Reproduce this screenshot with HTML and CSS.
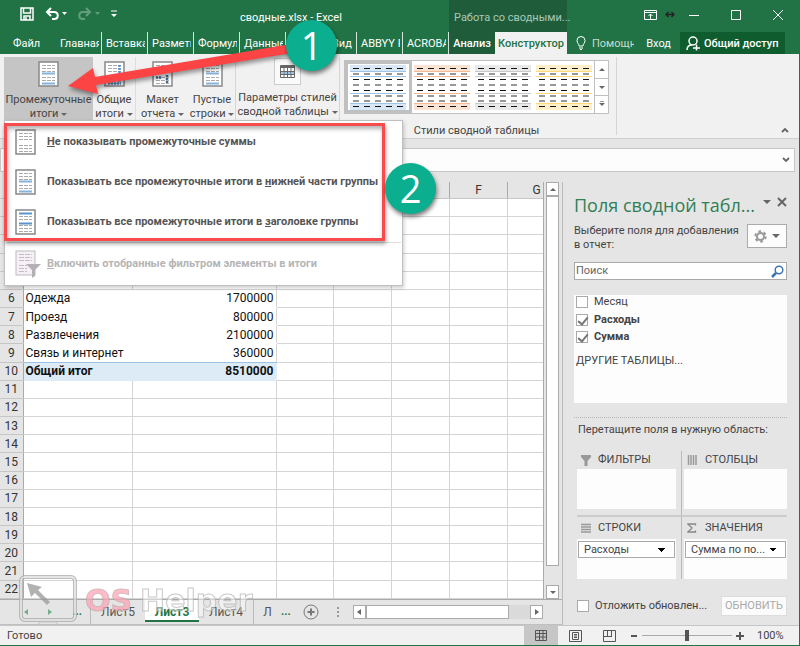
FILE: index.html
```html
<!DOCTYPE html>
<html lang="ru">
  <head>
    <meta charset="utf-8">
    <title>сводные.xlsx - Excel</title>
    <link rel="stylesheet" href="styles.css">
  </head>
  <body>
    <svg class="defs" width="0" height="0">
      <symbol id="report" viewBox="0 0 21 26">
        <rect x="1" y="1" width="19" height="24" fill="#fff" stroke="#888" stroke-width="1.5"/>
        <path d="M4 4.500h4M9 4.500h4M14 4.500h3M4 7.500h4M9 7.500h4M14 7.500h3M4 10.500h4M9 10.500h4M14 10.500h3M4 16.500h4M9 16.500h4M14 16.500h3M4 19.500h4M9 19.500h4M14 19.500h3M4 22.500h4M9 22.500h4M14 22.500h3" stroke="#aaa"/>
      </symbol>
      <symbol id="style" viewBox="0 0 56 45">
        <path d="M0 0h56v6H0zM0 38h56v7H0z" fill="currentColor" opacity=".4"/>
        <path d="M0 6.5h56M0 11.5h56M0 28.5h56M0 38.5h56" stroke="currentColor"/>
        <path d="M3 3.5h53M3 14.5h53M3 25.5h53M3 41.5h53" stroke="#111" stroke-dasharray="6 5"/>
        <path d="M3 9h53M3 20h53M3 31h53M3 36h53" stroke="#777" stroke-width="1.4" stroke-dasharray="6 5"/>
      </symbol>
    </svg>

    <header class="top">
      <div class="titlebar">
        <div class="quick">
          <button aria-label="Сохранить"><svg width="14" height="14" fill="none" stroke="#fff" stroke-width="1.5"><path d="M1 1h12v12H1zM3.500 1v5h7V1M4 13V9h6v4M6 10v3"/></svg></button>
          <button aria-label="Отменить"><svg width="22" height="14"><path d="M2 5h7c5 0 5 7 0 7H7M6 1L2 5l4 4" fill="none" stroke="#fff" stroke-width="2"/><path d="M17 5h5l-2.500 3z" fill="#fff"/></svg></button>
          <button class="faded" aria-label="Повторить"><svg width="22" height="14"><path d="M12 5H5c-5 0-5 7 0 7h2M8 1l4 4-4 4" fill="none" stroke="#fff" stroke-width="2"/><path d="M17 5h5l-2.500 3z" fill="#fff"/></svg></button>
          <button aria-label="Настройка"><svg width="6" height="8"><path d="M0 1h6" stroke="#fff"/><path d="M0 4h6L3 7z" fill="#fff"/></svg></button>
        </div>
        <div class="doc-name">сводные.xlsx - Excel</div>
        <div class="context-name">Работа со сводными...</div>
        <div class="window">
          <button aria-label="Параметры ленты"><svg width="13" height="10" fill="none" stroke="#fff"><path d="M.5.5h12v9H.5zM.5 2.500h12M6.500 9V4M4.500 6l2-2 2 2"/></svg></button>
          <svg class="resize" width="10" height="7"><path d="M1 3.500h8M3.500 1L1 3.500 3.500 6M6.500 1L9 3.500 6.500 6" fill="none" stroke="#222" stroke-width="1.300"/></svg>
          <button aria-label="Свернуть"><svg width="10" height="10"><path d="M0 5.500h10" stroke="#fff"/></svg></button>
          <button aria-label="Развернуть"><svg width="10" height="10"><path d="M.5.5h9v9h-9z" fill="none" stroke="#fff"/></svg></button>
          <button aria-label="Закрыть"><svg width="10" height="10"><path d="M0 0l10 10M10 0L0 10" stroke="#fff"/></svg></button>
        </div>
      </div>
      <nav class="tabs">
        <a class="file" href="#">Файл</a>
        <a class="tab" href="#">Главная</a>
        <a class="tab" href="#">Вставка</a>
        <a class="tab" href="#">Разметка</a>
        <a class="tab" href="#">Формулы</a>
        <a class="tab" href="#">Данные</a>
        <a class="tab review" href="#">Рецензирование</a>
        <a class="tab view" href="#">Вид</a>
        <a class="tab" href="#">ABBYY Fine</a>
        <a class="tab" href="#">ACROBAT</a>
        <a class="context" href="#">Анализ</a>
        <a class="context active" href="#">Конструктор</a>
        <a class="help" href="#"><svg width="10" height="14" fill="none" stroke="#fff"><path d="M3 10C3 8 1 7 1 4.500a4 4 0 0 1 8 0C9 7 7 8 7 10zM3 12h4M4 13.500h2"/></svg><span>Помощник</span></a>
        <a class="login" href="#">Вход</a>
        <a class="share" href="#"><svg width="15" height="15" fill="none" stroke="#fff" stroke-width="1.500"><circle cx="7" cy="5" r="4"/><path d="M1 14c0-3 2-5 5-5M7 12h7M10.500 8.500v6"/></svg>Общий доступ</a>
      </nav>
    </header>

    <section class="ribbon">
      <button class="cmd open"><svg width="21" height="26"><use href="#report"/><path d="M4 12.500h13M4 22.500h13" stroke="#86b2dd" stroke-width="2"/></svg><span>Промежуточные<br>итоги <i class="down"></i></span></button>
      <button class="cmd totals"><svg width="21" height="26"><use href="#report"/><path d="M15.500 4v18M4 22.500h13" stroke="#5b93cb" stroke-width="2.500" stroke-dasharray="2 1"/></svg><span>Общие<br>итоги <i class="down"></i></span></button>
      <button class="cmd layout"><svg width="21" height="26"><use href="#report"/><path d="M4 16.500h5M15 14v9" stroke="#3c6ea5" stroke-width="2.500" stroke-dasharray="2 1"/></svg><span>Макет<br>отчета <i class="down"></i></span></button>
      <button class="cmd blank"><svg width="21" height="26"><use href="#report"/><path d="M4 12.500h13M4 22.500h13" stroke="#86b2dd" stroke-width="2"/></svg><span>Пустые<br>строки <i class="down"></i></span></button>
      <button class="cmd options">
        <span class="frame"><svg width="15" height="13"><path d="M.5.5h14v12H.5z" fill="#fff"/><path d="M4 8h3M8 8h3M12 8h2M1 8h2" stroke="#9dc3e6" stroke-width="4"/><path d="M.5.5h14v12H.5zM4 3v10M7.500 3v10M11 3v10M0 6.500h15M0 9.500h15" fill="none" stroke="#666"/><path d="M1 2h13" stroke="#666" stroke-width="2"/></svg></span>
        <span>Параметры стилей<br>сводной таблицы <i class="down"></i></span>
      </button>
      <div class="styles">
        <div class="gallery">
          <button class="thumb blue selected" aria-label="Синий"><svg width="56" height="45"><use href="#style"/></svg></button>
          <button class="thumb orange" aria-label="Оранжевый"><svg width="56" height="45"><use href="#style"/></svg></button>
          <button class="thumb gray" aria-label="Серый"><svg width="56" height="45"><use href="#style"/></svg></button>
          <button class="thumb yellow" aria-label="Желтый"><svg width="56" height="45"><use href="#style"/></svg></button>
          <div class="gallery-nav">
            <button aria-label="Вверх"><i class="up"></i></button>
            <button aria-label="Вниз"><i class="down"></i></button>
            <button aria-label="Еще"><i class="down more"></i></button>
          </div>
        </div>
        <div class="caption">Стили сводной таблицы</div>
      </div>
      <button class="collapse" aria-label="Свернуть ленту"><svg width="8" height="6"><path d="M1 5l3-3 3 3" fill="none" stroke="#666" stroke-width="1.800"/></svg></button>
    </section>

    <div class="formula">
      <input type="text" aria-label="Строка формул">
      <svg width="8" height="6"><path d="M1 1l3 3 3-3" fill="none" stroke="#666" stroke-width="1.800"/></svg>
    </div>

    <main class="work">
      <section class="book">
        <div class="sheet">
          <div class="cells">
            <table>
              <colgroup><col class="c-num"><col class="c-a"><col class="c-b"><col><col><col><col><col></colgroup>
              <thead><tr><th></th><th>A</th><th>B</th><th>C</th><th>D</th><th>E</th><th>F</th><th>G</th></tr></thead>
              <tbody id="rows"></tbody>
            </table>
          </div>
          <div class="vscroll">
            <button aria-label="Вверх"><i class="up"></i></button>
            <div class="thumb-bar"></div>
            <button aria-label="Вниз"><i class="down"></i></button>
          </div>
        </div>
        <div class="sheet-bar">
          <div class="arrows"><i class="left"></i><i class="right"></i><b>...</b></div>
          <a href="#">Лист5</a>
          <a class="current" href="#">Лист3</a>
          <a href="#">Лист4</a>
          <a class="cut" href="#">Л</a>
          <b>...</b>
          <button class="add" aria-label="Новый лист"><svg width="16" height="16" fill="none" stroke="#777"><circle cx="8" cy="8" r="7"/><path d="M8 4.500v7M4.500 8h7" stroke-width="2"/></svg></button>
          <span class="grip"></span>
          <div class="hscroll">
            <button aria-label="Влево"><i class="left"></i></button>
            <div class="thumb-bar"></div>
            <button aria-label="Вправо"><i class="right"></i></button>
          </div>
        </div>
      </section>

      <aside class="pane">
        <div class="pane-head">
          <h2>Поля сводной табл...</h2>
          <button aria-label="Параметры панели"><i class="down"></i></button>
          <button aria-label="Закрыть панель"><svg width="10" height="10"><path d="M1 1l8 8M9 1L1 9" stroke="#666" stroke-width="2"/></svg></button>
        </div>
        <div class="hint">
          <p>Выберите поля для добавления<br>в отчет:</p>
          <button aria-label="Сервис"><svg width="13" height="13" fill="none" stroke="#999"><circle cx="6.500" cy="6.500" r="3.500" stroke-width="2"/><circle cx="6.500" cy="6.500" r="5.200" stroke-width="2" stroke-dasharray="2.700 2.740"/></svg><i class="down"></i></button>
        </div>
        <div class="search">
          <input type="text" placeholder="Поиск" aria-label="Поиск">
          <svg width="13" height="13" fill="none" stroke="#3b74b3"><circle cx="8" cy="5" r="3.800" stroke-width="1.500"/><path d="M5 8l-4 4" stroke-width="2.500"/></svg>
        </div>
        <div class="fields">
          <label><input type="checkbox">Месяц</label>
          <label class="on"><input type="checkbox" checked>Расходы</label>
          <label class="on"><input type="checkbox" checked>Сумма</label>
          <a href="#">ДРУГИЕ ТАБЛИЦЫ...</a>
        </div>
        <p class="drag">Перетащите поля в нужную область:</p>
        <div class="areas">
          <div class="area">
            <h3><svg width="12" height="11"><path d="M1 0h10v2L7.500 6v5h-3V6L1 2z" fill="#999"/></svg>ФИЛЬТРЫ</h3>
            <div class="drop"></div>
          </div>
          <div class="area">
            <h3><svg width="12" height="11"><path d="M1.500 0v10M4 0v10M6.500 0v10M9 0v10" stroke="#999" stroke-width="1.500"/></svg>СТОЛБЦЫ</h3>
            <div class="drop"></div>
          </div>
          <div class="area">
            <h3><svg width="12" height="11"><path d="M1 1.500h10M1 4h10M1 6.500h10M1 9h10" stroke="#999" stroke-width="1.500"/></svg>СТРОКИ</h3>
            <div class="drop"><select aria-label="Строки"><option>Расходы</option></select></div>
          </div>
          <div class="area">
            <h3><svg width="12" height="11"><path d="M8.500 2.500V1H1l4 4-4 4h7.500V7.500" fill="none" stroke="#888" stroke-width="1.300"/></svg>ЗНАЧЕНИЯ</h3>
            <div class="drop"><select aria-label="Значения"><option>Сумма по по...</option></select></div>
          </div>
        </div>
        <div class="defer">
          <label><input type="checkbox">Отложить обновлен...</label>
          <button disabled>ОБНОВИТЬ</button>
        </div>
      </aside>
    </main>

    <footer class="status">
      <span class="ready">Готово</span>
      <button class="current" aria-label="Обычный"><svg width="12" height="11" fill="none" stroke="#555"><path d="M.5.5h11v10H.5zM4.500 0v11M8 0v11M0 3.500h12M0 7h12"/></svg></button>
      <button aria-label="Разметка страницы"><svg width="13" height="12" fill="none" stroke="#555"><path d="M.5.5h12v11H.5zM3.500 2.500h6v7h-6zM5 4.500h3M5 6h3M5 7.500h3"/></svg></button>
      <button aria-label="Страничный"><svg width="13" height="12" fill="none" stroke="#555"><path d="M.5.500h12v11H.5zM4.500 0v6.500M8.500 0v6.500M0 6.500h9"/></svg></button>
      <button class="sign" aria-label="Уменьшить"><svg width="8" height="8"><path d="M1 4h6" stroke="#555" stroke-width="2"/></svg></button>
      <input type="range" min="0" max="200" value="100" aria-label="Масштаб">
      <button class="sign" aria-label="Увеличить"><svg width="8" height="8"><path d="M0 4h8M4 0v8" stroke="#555" stroke-width="2"/></svg></button>
      <span class="percent">100%</span>
    </footer>

    <div class="menu">
      <button><svg width="21" height="26"><use href="#report"/></svg><span><u>Н</u>е показывать промежуточные суммы</span></button>
      <button><svg width="21" height="26"><use href="#report"/><path d="M4 12.500h13M4 22.500h13" stroke="#86b2dd" stroke-width="2"/></svg><span>Показывать все промежуточные итоги в <u>н</u>ижней части группы</span></button>
      <button><svg width="21" height="26"><use href="#report"/><path d="M4 4.500h13M4 14.500h13" stroke="#5b93cb" stroke-width="2"/></svg><span>Показывать все промежуточные итоги в <u>з</u>аголовке группы</span></button>
      <button class="off" disabled><svg width="26" height="28"><rect x="1" y="1" width="19" height="24" fill="#f5f0f5" stroke="#bbb"/><path d="M4 4.500h13M4 7.500h13M4 10.500h13M4 15.500h8M4 18.500h8M4 21.500h8" stroke="#c9bcc9" stroke-dasharray="5 1"/><path d="M11 14h15l-6 6v6l-3 2v-8z" fill="#b5b0b5"/></svg><span><u>В</u>ключить отобранные фильтром элементы в итоги</span></button>
    </div>

    <div class="frame-red"></div>
    <svg class="arrow" width="260" height="80"><path d="M3 53L28 35l2 9L238 9l2 9L31 52l2 9z" fill="#fc4444"/></svg>
    <div class="step one">1</div>
    <div class="step two">2</div>

    <div class="watermark">
      <svg width="58" height="52" fill="none"><rect x="2" y="2" width="54" height="43" rx="4" stroke="#aaa" stroke-width="4"/><rect x="2" y="2" width="54" height="43" rx="4" stroke="#eee" stroke-width="1.500"/><path d="M8 8l15 4-4 3 12 12-3 3-12-12-4 4z" fill="#999"/><path d="M20 51v-4h18v4" stroke="#bbb"/></svg>
      <span class="os">OS</span>
      <span class="helper">Helper</span>
    </div>
    <script src="script.js"></script>
  </body>
</html>
```
FILE: script.js
```js
const data = {
  6: ['Одежда', '1700000'],
  7: ['Проезд', '800000'],
  8: ['Развлечения', '2100000'],
  9: ['Связь и интернет', '360000'],
  10: ['Общий итог', '8510000']
};

const tbody = document.getElementById('rows');

for (let i = 1; i <= 22; i++) {
  const row = document.createElement('tr');
  const cells = data[i] || ['', ''];
  if (i === 10) {
    row.className = 'total';
  } else if (data[i]) {
    row.className = 'pivot';
  }
  row.innerHTML = `<th>${i}</th><td>${cells[0]}</td><td>${cells[1]}</td>`;
  row.innerHTML += '<td></td>'.repeat(5);
  tbody.appendChild(row);
}
```
FILE: styles.css
```css
* {
  box-sizing: border-box;
}

body {
  margin: 0;
  min-height: 100vh;
  display: flex;
  flex-direction: column;
  position: relative;
  overflow-x: hidden;
  background: #e5e5e5;
  border-right: 1px solid #217346;
  border-bottom: 1px solid #217346;
  font: 11px/14px Roboto, "Open Sans", sans-serif;
  color: #444;
}

button,
input,
select {
  font: inherit;
  color: inherit;
  margin: 0;
  padding: 0;
  border: 0;
  background: none;
}

a {
  color: inherit;
  text-decoration: none;
}

p,
h2,
h3 {
  margin: 0;
  font-weight: normal;
}

svg {
  display: block;
  flex: none;
}

.defs {
  position: absolute;
}

/* triangles */
.down,
.up,
.left,
.right {
  display: inline-block;
  border: 3px solid transparent;
  width: 0;
  height: 0;
}

.down {
  border-top-color: #666;
  border-bottom: 0;
  vertical-align: middle;
}

.up {
  border-bottom-color: #666;
  border-top: 0;
}

.left {
  border-right: 4px solid #666;
  border-left: 0;
}

.right {
  border-left: 4px solid #666;
  border-right: 0;
}

/* title and tabs */
.top {
  background: #217346;
  color: #fff;
}

.titlebar {
  display: flex;
  height: 32px;
}

.quick {
  width: 240px;
  padding: 0 0 4px 20px;
  display: flex;
  align-items: center;
  gap: 11px;
}

.faded {
  opacity: .3;
}

.doc-name {
  width: 209px;
  padding-top: 11px;
}

.context-name {
  width: 118px;
  padding: 11px 0 0 5px;
  background: #1e5c3a;
  color: #a9c9b7;
  white-space: nowrap;
}

.window {
  flex: 1;
  display: flex;
  justify-content: flex-end;
  align-items: center;
  padding: 0 16px 3px 0;
}

.window button + button {
  margin-left: 32px;
}

.window .resize {
  margin: 0 14px 0 8px;
}

.tabs {
  display: flex;
  height: 22px;
  line-height: 23px;
  white-space: nowrap;
}

.file {
  width: 56px;
  padding-left: 13px;
}

.tab {
  width: 46px;
  padding-left: 4px;
  border-right: 1px solid #d5e5dc;
  overflow: hidden;
  position: relative;
}

/* keeps a strip clear between clipped name and divider */
.tab::after {
  content: "";
  position: absolute;
  top: 0;
  right: 0;
  width: 2px;
  height: 22px;
  background: #217346;
}

.tab.review {
  width: 42px;
}

.tab.view {
  width: 29px;
}

.context {
  width: 46px;
  background: #1e5c3a;
  text-align: center;
  font-weight: 500;
}

.context.active {
  width: 72px;
  background: #f1f1f1;
  color: #217346;
}

.help {
  width: 67px;
  padding-left: 9px;
  display: flex;
  align-items: center;
  gap: 6px;
  color: #c8ddd1;
}

.help span {
  overflow: hidden;
}

.login {
  margin-left: auto;
}

.share {
  width: 105px;
  margin: 0 14px 0 9px;
  padding-left: 6px;
  display: flex;
  align-items: center;
  gap: 3px;
  background: #0f5c2f;
  font-weight: 500;
}

/* ribbon */
.ribbon {
  display: flex;
  height: 85px;
  padding: 3px 7px 0 4px;
  background: #f1f1f1;
  border-bottom: 1px solid #d0d0d0;
}

.cmd {
  height: 64px;
  display: flex;
  flex-direction: column;
  align-items: center;
  padding-top: 4px;
  gap: 6px;
  white-space: nowrap;
}

.cmd.open {
  width: 89px;
  background: #c5c5c5;
}

.totals {
  width: 43px;
  border-right: 1px solid #ddd;
}

.layout {
  width: 53px;
}

.blank {
  width: 46px;
}

.options {
  width: 105px;
  padding-top: 1px;
  border-left: 1px solid #d5d5d5;
  border-right: 1px solid #d5d5d5;
}

.frame {
  padding: 6px 5px;
  border: 1px solid #ccc;
  background: #fafafa;
}

.styles {
  width: 277px;
  height: 78px;
  padding: 3px 7px 0 4px;
  border-right: 1px solid #d5d5d5;
}

.gallery {
  display: flex;
  height: 54px;
  background: #fff;
  border: 1px solid #c0c0c0;
}

.thumb {
  flex: 1;
  display: flex;
  align-items: center;
  justify-content: center;
}

.thumb.selected {
  border: 3px solid #c0c0c0;
}

.blue {
  color: #9dc3e6;
}

.orange {
  color: #f4b992;
}

.gray {
  color: #c9c9c9;
}

.yellow {
  color: #ffd978;
}

.gallery-nav {
  width: 14px;
  display: flex;
  flex-direction: column;
  border-left: 1px solid #c0c0c0;
}

.gallery-nav button {
  flex: 1;
  display: flex;
  align-items: center;
  justify-content: center;
}

.gallery-nav button + button {
  border-top: 1px solid #c0c0c0;
}

.more {
  box-shadow: 0 -3px 0 -1px #999;
}

.caption {
  margin-top: 10px;
  text-align: center;
}

.collapse {
  margin-left: auto;
  align-self: flex-end;
  padding: 5px 3px;
}

.formula {
  display: flex;
  align-items: center;
  height: 24px;
  margin: 9px 4px 10px 0;
  padding-right: 4px;
  background: #fdfdfd;
  border: 1px solid #c6c6c6;
}

.formula input {
  flex: 1;
}

/* sheet */
.work {
  flex: 1;
  display: flex;
}

.book {
  flex: 1;
  min-width: 0;
  display: flex;
  flex-direction: column;
  border-right: 1px solid #bbb;
}

.sheet {
  flex: 1;
  display: flex;
  border-bottom: 1px solid #aaa;
}

.cells {
  flex: 1;
  min-width: 0;
  overflow: hidden;
  border-right: 1px solid #aaa;
}

.cells table {
  width: 566px;
  height: 100%;
  table-layout: fixed;
  border-collapse: collapse;
  background: #fff;
  color: #111;
  font-size: 12px;
  line-height: 16px;
}

.c-num {
  width: 23px;
}

.c-a {
  width: 109px;
}

.c-b {
  width: 144px;
}

.cells th {
  padding: 0;
  background: #e5e5e5;
  border-right: 1px solid #aaa;
  border-bottom: 1px solid #c6c6c6;
  font-weight: normal;
  color: #333;
}

.cells td {
  padding: 0 2px;
  border-right: 1px solid #d4d4d4;
  border-bottom: 1px solid #d4d4d4;
}

.cells td:nth-child(3) {
  text-align: right;
}

.pivot td:nth-child(2),
.pivot td:nth-child(3) {
  border-bottom-color: #fff;
}

.pivot td:nth-child(2) {
  border-right-color: #fff;
}

.total td:nth-child(2),
.total td:nth-child(3) {
  background: #ddebf7;
  border-color: #ddebf7;
  font-weight: bold;
}

.pivot:has(+ .total) td:nth-child(2),
.pivot:has(+ .total) td:nth-child(3) {
  border-bottom-color: #9bc2e6;
}

.vscroll {
  width: 18px;
  padding: 0 3px 0 2px;
  display: flex;
  flex-direction: column;
}

.vscroll button,
.hscroll button {
  width: 13px;
  height: 14px;
  display: flex;
  align-items: center;
  justify-content: center;
  background: #fff;
  border: 1px solid #aaa;
}

.thumb-bar {
  background: #fff;
  border: 1px solid #aaa;
}

.vscroll .thumb-bar {
  flex: 1;
  margin-bottom: 19px;
}

.sheet-bar {
  height: 25px;
  display: flex;
  color: #555;
  line-height: 24px;
  border-bottom: 1px solid #c0c0c0;
}

.sheet-bar b {
  color: #217346;
}

.sheet-bar a {
  width: 54px;
  text-align: center;
  font-size: 12px;
}

.sheet-bar .current {
  height: 22px;
  background: #fff;
  border-bottom: 2px solid #217346;
  color: #217346;
  font-weight: bold;
}

.sheet-bar .cut {
  width: 28px;
  border-left: 1px solid #bbb;
}

.arrows {
  width: 91px;
  padding: 0 8px 0 24px;
  display: flex;
  align-items: center;
  justify-content: space-between;
  border-right: 1px solid #bbb;
}

.arrows .left {
  border-right-color: #72ad8c;
}

.arrows .right {
  border-left-color: #72ad8c;
}

.add {
  margin-left: 12px;
}

.grip {
  height: 10px;
  margin: 7px 14px 0 18px;
  border-left: 2px dotted #999;
}

.hscroll {
  flex: 1;
  height: 14px;
  margin: 5px 19px 0 0;
  display: flex;
  background: #dadada;
}

.hscroll .thumb-bar {
  flex: 1;
  margin-right: 21px;
}

/* fields pane */
.pane {
  width: 236px;
  padding: 10px 12px 0 11px;
}

.pane-head {
  display: flex;
  align-items: center;
  height: 26px;
}

.pane-head h2 {
  flex: 1;
  font: 18px/26px "Open Sans", sans-serif;
  color: #317f55;
  white-space: nowrap;
}

.pane-head button {
  margin: 0 0 6px 6px;
}

.pane-head .down,
.hint .down {
  border-width: 4px 4px 0;
}

.hint {
  display: flex;
  justify-content: space-between;
  margin-top: 6px;
}

.hint p {
  white-space: nowrap;
}

.hint button {
  width: 40px;
  height: 24px;
  display: flex;
  align-items: center;
  justify-content: space-evenly;
  background: #fcfcfc;
  border: 1px solid #aaa;
}

.search {
  display: flex;
  align-items: center;
  height: 18px;
  margin-top: 10px;
  padding: 0 2px 0 1px;
  background: #fff;
  border: 1px solid #aaa;
}

.search input {
  flex: 1;
  min-width: 0;
}

.search input::placeholder {
  color: #666;
}

.fields {
  height: 108px;
  margin-top: 15px;
  padding-left: 2px;
  background: #fdfdfd;
}

.fields label,
.defer label {
  display: flex;
  align-items: center;
  gap: 6px;
  height: 17px;
}

.fields label:first-child {
  height: 14px;
  margin-bottom: 2px;
}

.fields .on {
  font-weight: bold;
}

.fields a {
  display: block;
  margin-top: 9px;
}

input[type="checkbox"] {
  appearance: none;
  width: 12px;
  height: 12px;
  background: #fff;
  border: 1px solid #aaa;
}

input[type="checkbox"]:checked::after {
  content: "";
  display: block;
  width: 4px;
  height: 8px;
  margin-left: 3px;
  border: solid #777;
  border-width: 0 2px 2px 0;
  transform: rotate(40deg);
}

.drag {
  margin-top: 14px;
  padding: 5px 0 0 4px;
  border-top: 1px dotted #b5b5b5;
  white-space: nowrap;
}

.areas {
  display: grid;
  grid-template-columns: 1fr 1fr;
  margin: 14px 0 0 3px;
}

.area {
  height: 64px;
}

.area:nth-child(odd) {
  padding-right: 5px;
  border-right: 1px solid #bbb;
}

.area:nth-child(even) {
  padding-left: 2px;
}

.area:nth-child(n + 3) {
  border-top: 2px solid #ccc;
}

.area h3 {
  display: flex;
  align-items: center;
  gap: 6px;
  height: 18px;
  padding-left: 3px;
  font-size: 11px;
}

.area:nth-child(n + 3) h3 {
  height: 22px;
}

.drop {
  height: 40px;
  padding: 2px 1px;
  background: #fdfdfd;
}

.drop select {
  appearance: none;
  width: 100%;
  height: 17px;
  padding-left: 5px;
  border: 1px solid #aaa;
  background:
    linear-gradient(45deg, transparent 50%, #000 50%) right 12px top 6px / 4px 4px no-repeat,
    linear-gradient(-45deg, transparent 50%, #000 50%) right 8px top 6px / 4px 4px no-repeat,
    #fff;
}

.defer {
  display: flex;
  justify-content: space-between;
  align-items: center;
  margin: 17px 0 0 3px;
  white-space: nowrap;
}

.defer button {
  width: 66px;
  height: 20px;
  background: #fbfbfb;
  border: 1px solid #ddd;
  color: #aaa;
}

/* status bar */
.status {
  display: flex;
  align-items: center;
  height: 20px;
  background: #f1f1f1;
  border-top: 1px solid #c6c6c6;
}

.ready {
  flex: 1;
  padding-left: 7px;
}

.status button {
  width: 34px;
  height: 19px;
  display: flex;
  align-items: center;
  justify-content: center;
}

.status .current {
  background: #c6c6c6;
}

.status .sign {
  width: 16px;
}

.status input {
  appearance: none;
  width: 90px;
  height: 12px;
  background: linear-gradient(#aaa, #aaa) center / 100% 1px no-repeat;
}

.status input::-webkit-slider-thumb {
  appearance: none;
  width: 4px;
  height: 11px;
  background: #555;
}

.percent {
  width: 51px;
  padding-left: 9px;
}

/* drop-down menu */
.menu {
  position: absolute;
  top: 120px;
  left: 4px;
  width: 399px;
  padding: 1px;
  background: #fff;
  border: 1px solid #c0c0c0;
  box-shadow: 1px 2px 4px rgba(0, 0, 0, .2);
}

.menu button {
  width: 100%;
  height: 40px;
  display: flex;
  align-items: center;
  gap: 11px;
  padding-left: 9px;
  color: #555;
  font-weight: bold;
  white-space: nowrap;
}

.menu .off {
  height: 42px;
  gap: 6px;
  border-top: 1px solid #ddd;
  color: #b5b5b5;
}

/* callouts */
.frame-red {
  position: absolute;
  top: 123px;
  left: 4px;
  width: 381px;
  height: 118px;
  border: 3px solid #f94b4b;
  box-shadow: 1px 3px 4px rgba(0, 0, 0, .35), inset 1px 3px 4px rgba(0, 0, 0, .3);
  pointer-events: none;
}

.arrow {
  position: absolute;
  top: 33px;
  left: 65px;
  filter: drop-shadow(1px 3px 2px rgba(0, 0, 0, .4));
  pointer-events: none;
}

.step {
  position: absolute;
  width: 51px;
  height: 51px;
  border-radius: 50%;
  background: #0bae8f;
  box-shadow: 1px 3px 4px rgba(0, 0, 0, .5);
  color: #fff;
  font: 38px/50px "Open Sans", sans-serif;
  text-align: center;
}

.one {
  top: 20px;
  left: 286px;
}

.two {
  top: 163px;
  left: 385px;
}

.watermark {
  position: absolute;
  left: 19px;
  bottom: 18px;
  display: flex;
  align-items: center;
  gap: 8px;
  font: bold 30px/34px "DejaVu Sans", sans-serif;
  opacity: .75;
  pointer-events: none;
}

.os {
  color: #ffa5b5;
  -webkit-text-stroke: 1px #c5a5aa;
}

.helper {
  color: rgba(255, 255, 255, .6);
  -webkit-text-stroke: 1px #b5b5b5;
}
```
